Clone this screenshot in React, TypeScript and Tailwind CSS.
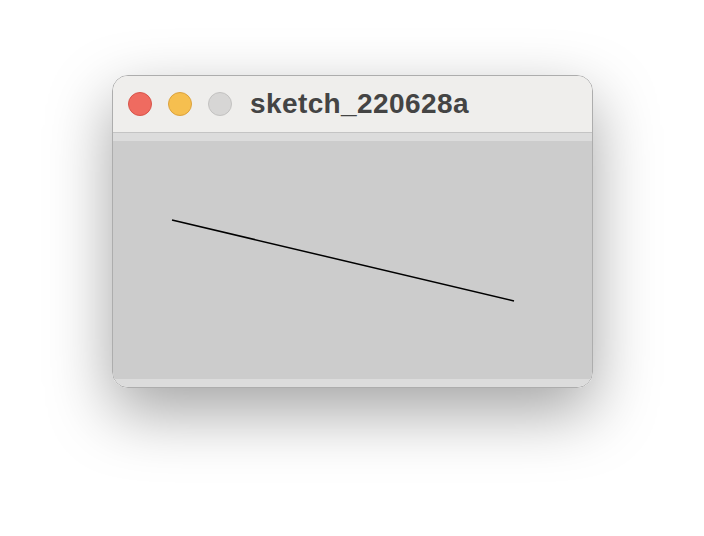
export default function App() {
  return (
    <div className="w-[704px] h-[536px] bg-white pt-[75px] pl-[112px]">
      {/* Window */}
      <div className="w-[481px] h-[313px] rounded-[16px] border border-[#adadad] overflow-hidden flex flex-col shadow-[0_24px_64px_rgba(0,0,0,0.36)]">
        {/* Title bar */}
        <div className="h-[57px] shrink-0 bg-[#efeeec] border-b border-[#c4c4c4] flex items-center pl-[15px]">
          <div className="flex items-center gap-[16px]">
            <span className="w-[24px] h-[24px] rounded-full bg-[#ef6b60] border border-[#d8544a]" />
            <span className="w-[24px] h-[24px] rounded-full bg-[#f6bf4f] border border-[#dca23d]" />
            <span className="w-[24px] h-[24px] rounded-full bg-[#d7d6d5] border border-[#c3c2c1]" />
          </div>
          <span className="ml-[18px] text-[28px] tracking-[0.4px] font-bold text-[#444444] leading-none font-['Liberation_Sans',Arial,sans-serif]">
            sketch_220628a
          </span>
        </div>
        <div className="h-[8px] shrink-0 bg-[#dcdcdc]" />
        {/* Canvas */}
        <div className="h-[238px] shrink-0 bg-[#cccccc]">
          <svg width="479" height="238" viewBox="0 0 479 238">
            <line x1="59" y1="79" x2="401" y2="160" stroke="#000" strokeWidth="1.5" />
          </svg>
        </div>
        <div className="flex-1 bg-[#dcdcdc]" />
      </div>
    </div>
  );
}
